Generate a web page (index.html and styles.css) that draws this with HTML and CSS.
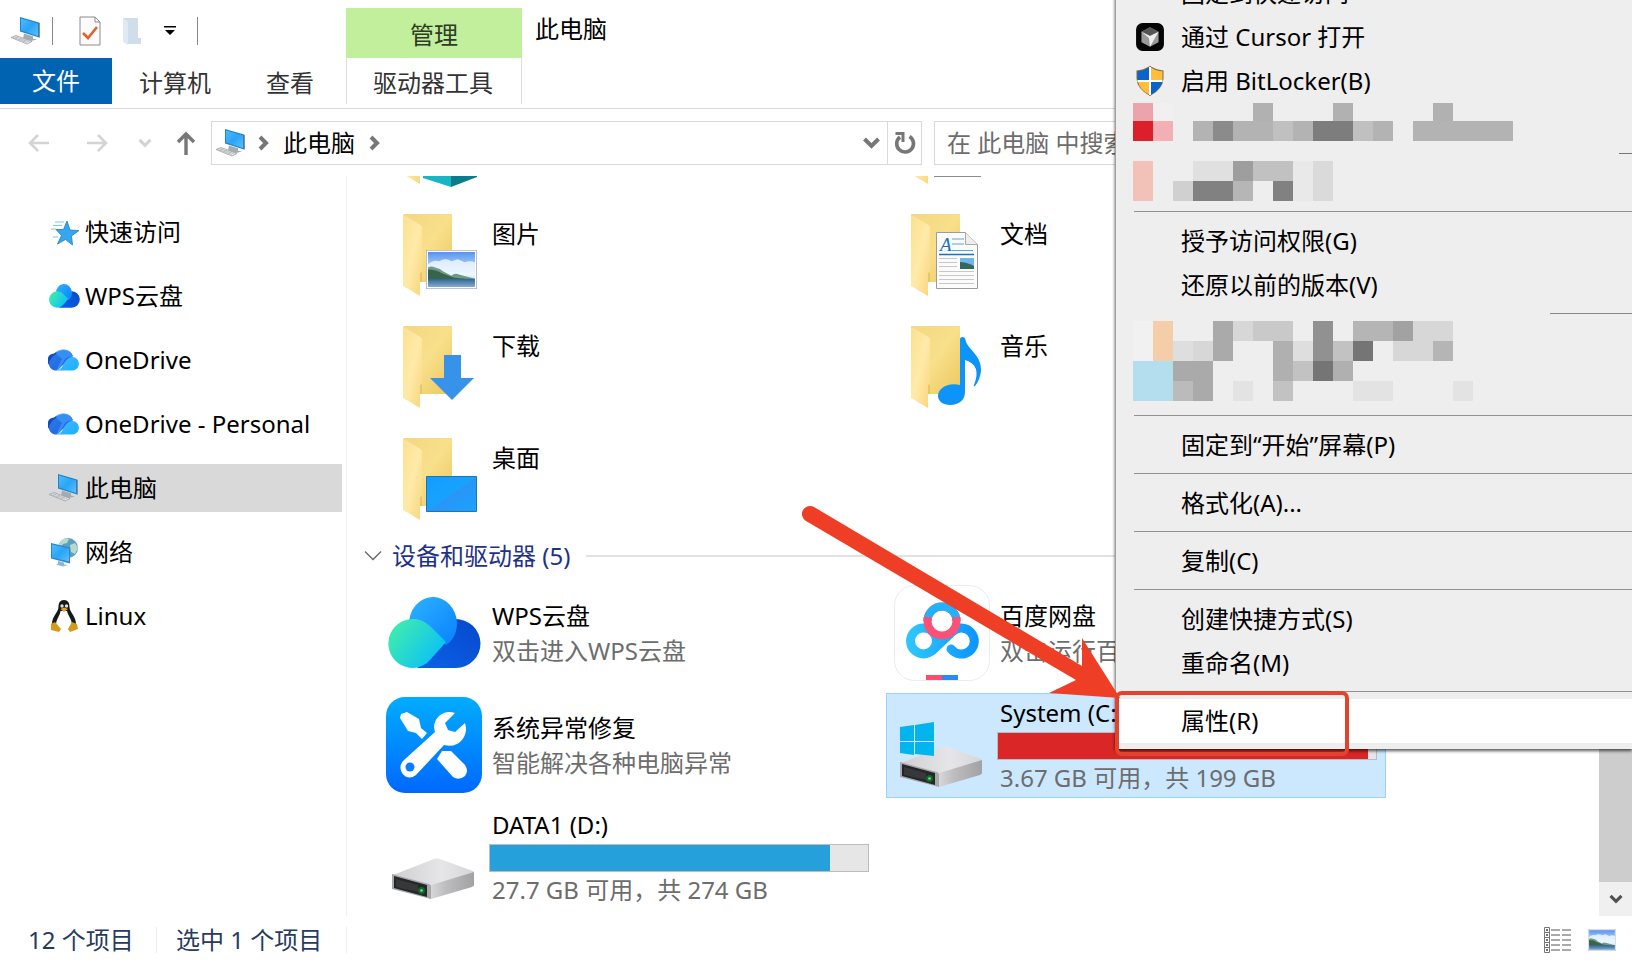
FILE: index.html
```
<!DOCTYPE html>
<html lang="zh-CN">
<head>
<meta charset="utf-8">
<title>此电脑</title>
<link rel="stylesheet" href="styles.css">
</head>
<body>
<svg class="defs" aria-hidden="true">
  <defs>
    <linearGradient id="gBack" x1="0" y1="0" x2="1" y2="1"><stop offset="0" stop-color="#f3d883"/><stop offset=".5" stop-color="#f8df8a"/><stop offset="1" stop-color="#ecc75d"/></linearGradient>
    <linearGradient id="gFront" x1="0" y1="0" x2="1" y2="1"><stop offset="0" stop-color="#fbe08e"/><stop offset=".5" stop-color="#ffeaa8"/><stop offset="1" stop-color="#f7d67c"/></linearGradient>
    <linearGradient id="gScreen" x1="0" y1="0" x2="1" y2="1"><stop offset="0" stop-color="#4dbcff"/><stop offset=".5" stop-color="#2ba4f7"/><stop offset="1" stop-color="#5cc0ff"/></linearGradient>
    <linearGradient id="gSky" x1="0" y1="0" x2="0" y2="1"><stop offset="0" stop-color="#5793ee"/><stop offset=".45" stop-color="#b5d6f8"/><stop offset=".7" stop-color="#d8edfa"/></linearGradient>
    <linearGradient id="gWater" x1="0" y1="0" x2="0" y2="1"><stop offset="0" stop-color="#2f648b"/><stop offset="1" stop-color="#83abd6"/></linearGradient>
    <linearGradient id="gGreen" x1="0" y1=".2" x2="1" y2=".8"><stop offset="0" stop-color="#42edaa"/><stop offset="1" stop-color="#05bdff"/></linearGradient>
    <linearGradient id="gCloudTop" x1="0" y1="0" x2="1" y2="1"><stop offset="0" stop-color="#2cb4ff"/><stop offset="1" stop-color="#0a80ff"/></linearGradient>
    <linearGradient id="gCloudDark" x1="0" y1="1" x2="1" y2="0"><stop offset="0" stop-color="#0a62e8"/><stop offset="1" stop-color="#0748cc"/></linearGradient>
    <linearGradient id="gOne" x1="0" y1="0" x2="1" y2="1"><stop offset="0" stop-color="#2f7fe8"/><stop offset="1" stop-color="#1a5fe0"/></linearGradient>
    <linearGradient id="gOneLight" x1="0" y1="0" x2="1" y2="1"><stop offset="0" stop-color="#50b0ff"/><stop offset="1" stop-color="#12b5fb"/></linearGradient>
    <linearGradient id="gTool" x1="0" y1="0" x2="0" y2="1"><stop offset="0" stop-color="#00adff"/><stop offset="1" stop-color="#0068ff"/></linearGradient>
    <linearGradient id="gDriveTop" x1="0" y1="0" x2="1" y2="0"><stop offset="0" stop-color="#cfcfd1"/><stop offset=".6" stop-color="#e6e6e8"/><stop offset="1" stop-color="#d6d6d8"/></linearGradient>
    <linearGradient id="gDriveSide" x1="0" y1="0" x2="1" y2="0"><stop offset="0" stop-color="#dededf"/><stop offset=".4" stop-color="#bdbdbf"/><stop offset="1" stop-color="#a2a2a5"/></linearGradient>
    <linearGradient id="gBd" gradientUnits="userSpaceOnUse" x1="12" y1="0" x2="84" y2="0"><stop offset="0" stop-color="#30c8fb"/><stop offset="1" stop-color="#0c95ff"/></linearGradient>
    <linearGradient id="gDesk" x1="0" y1="0" x2="1" y2="1"><stop offset="0" stop-color="#129cff"/><stop offset=".5" stop-color="#18a2ff"/><stop offset=".51" stop-color="#2a95f5"/><stop offset="1" stop-color="#1aa2ff"/></linearGradient>
    <symbol id="pc" viewBox="0 0 32 30">
      <path d="M10 1l19 5.500v15L10 15.500z" fill="#2483c9"/>
      <path d="M11 2.500l17 5v12.600L11 14.500z" fill="url(#gScreen)"/>
      <path d="M29 6.500l1 .4v14.800l-1-.2z" fill="#85909a"/>
      <path d="M14 17.500l9 2.700v2.300l4 1-6 1.500-8-2.500z" fill="#a4acb2"/>
      <path d="M1 21.500l5-2 16 6-5 2.500z" fill="#e9ebec" stroke="#9ba1a6" stroke-width=".8"/>
      <path d="M3 21.500l14 5M5 20.700l14 5M8 21l-3 1.500M12 22.500l-3 1.500M16 24l-3 1.500" stroke="#aab0b5" stroke-width=".7"/>
    </symbol>
    <symbol id="folder" viewBox="0 0 96 96">
      <path d="M17 7h49v68H34z" fill="url(#gBack)"/>
      <path d="M36 20v55h-3V20z" fill="#dcb653" opacity=".5"/>
      <path d="M17 7.500l18 11q1 .7 1 2V65l-2 1v23L17 79z" fill="url(#gFront)"/>
    </symbol>
    <symbol id="photo" viewBox="0 0 50 38" preserveAspectRatio="none">
      <path d="M0 0h50v38H0z" fill="#a9b4bd"/><path d="M.8.800h48.400v36.400H.8z" fill="#fff"/>
      <path d="M2 2h46v34H2z" fill="url(#gSky)"/>
      <path d="M2 14q5-5 11-3 6-4 12 0l6-2 7 3q5-2 10 0v13H2z" fill="#f3faff" opacity=".8"/>
      <path d="M2 17q3-2 7 0 5 1 8 4l8 4q3-3 8-1l15 4v1H2z" fill="#6f9a83"/>
      <path d="M2 19q8 0 14 4l12 4 10 1v1H2z" fill="#35664c"/>
      <path d="M2 28h46v8H2z" fill="url(#gWater)"/>
    </symbol>
    <symbol id="wps" viewBox="0 0 96 72">
      <path d="M70 22a25 24.500 0 0 1 1 49H32q20-18 30-48z" fill="url(#gCloudDark)"/>
      <path d="M24 28A24 27 0 0 1 72 26q0 9-4 15-3 5-7 7L38 30z" fill="url(#gCloudTop)"/>
      <path d="M27 71a24.500 24.500 0 1 1 18-42l16 16Q47 61 42 66q-7 5-15 5z" fill="url(#gGreen)"/>
    </symbol>
    <symbol id="onedrive" viewBox="0 0 32 22">
      <path d="M6 4.500a7 7 0 0 1 9-.5L4 18a7 7 0 0 1 2-13.500z" fill="#144cbd"/>
      <path d="M8 5.500A9.500 9.500 0 0 1 25 7L9 21.500H7A6.500 6.500 0 0 1 2.500 11Q5 6 8 5.500z" fill="url(#gOne)"/>
      <path d="M7 3.500Q16-3 23 4l2 4q-6-1-9 4l-4 7q-1 2.500-4 2.500L14 10z" fill="#3c9cfa" opacity=".7"/>
      <path d="M9 21.500q4-1 6-5 4-9 10-8.500a6.800 6.800 0 0 1 0 13.500z" fill="url(#gOneLight)"/>
    </symbol>
    <symbol id="drive" viewBox="0 0 96 96">
      <path d="M7 66L48 50q3-1 6 0l33 12q2 1 0 2L45 79z" fill="url(#gDriveTop)"/>
      <path d="M42 77l46-14v13q0 1-2 2L45 90l-4-1z" fill="url(#gDriveSide)"/>
      <path d="M6 65l37 10q2 .5 2 3v12L6 80z" fill="#a8a8ab"/>
      <path d="M8 67l33 9v12L8 79z" fill="#242728"/>
      <path d="M10 70l22 6v7l-22-5z" fill="#35393a"/>
      <circle cx="35.500" cy="81.500" r="3.500" fill="#15652d"/><circle cx="35.500" cy="81.500" r="1.300" fill="#6fe789"/>
    </symbol>
    <symbol id="chevD" viewBox="0 0 18 12"><path d="M2 2l7 7 7-7" fill="none" stroke="currentColor" stroke-width="4"/></symbol>
    <symbol id="chevR" viewBox="0 0 12 16"><path d="M2 2l6 6-6 6" fill="none" stroke="currentColor" stroke-width="4"/></symbol>
  </defs>
</svg>

<header class="ribbon">
  <div class="title-row">
    <div class="quick">
      <svg class="i32"><use href="#pc"/></svg>
      <span class="bar"></span>
      <button class="bare" aria-label="属性"><svg class="q-doc" viewBox="0 0 22 30"><path d="M1 1h15l5 5v23H1z" fill="#fbfbfb" stroke="#8b8b8b"/><path d="M16 1v5h5" fill="none" stroke="#8b8b8b"/><path d="M4 17l5 5 9-11" fill="none" stroke="#e2622d" stroke-width="2.600"/></svg></button>
      <button class="bare" aria-label="新建文件夹"><svg class="q-fold" viewBox="0 0 20 30"><path d="M1 2h15v20h3v6H5z" fill="#d0deec"/><path d="M1 2l5 4v23l-5-3z" fill="#dfeaf5"/></svg></button>
      <button class="bare" aria-label="自定义"><svg class="q-tri" viewBox="0 0 12 10"><path d="M0 0h12v1.500H0zM1 4h10L6 9z"/></svg></button>
      <span class="bar"></span>
    </div>
    <div class="manage">管理</div>
    <h1 class="title">此电脑</h1>
  </div>
  <nav class="tabs">
    <button class="tab file">文件</button>
    <button class="tab">计算机</button>
    <button class="tab">查看</button>
    <button class="tab tools">驱动器工具</button>
  </nav>
</header>

<div class="nav-row">
  <div class="arrows">
    <button class="bare" aria-label="后退"><svg class="arrow" viewBox="0 0 22 20"><path d="M21 10H2M10 2l-8 8 8 8" fill="none" stroke="#d4d4d4" stroke-width="2.600"/></svg></button>
    <button class="bare" aria-label="前进"><svg class="arrow" viewBox="0 0 22 20"><path d="M1 10h19M12 2l8 8-8 8" fill="none" stroke="#d4d4d4" stroke-width="2.600"/></svg></button>
    <button class="bare pale" aria-label="最近"><svg class="chev-sm"><use href="#chevD"/></svg></button>
    <button class="bare" aria-label="上移"><svg class="up" viewBox="0 0 20 24"><path d="M10 24V3M2 11l8-8 8 8" fill="none" stroke="#777" stroke-width="3.400"/></svg></button>
  </div>
  <div class="address">
    <svg class="i32"><use href="#pc"/></svg>
    <svg class="crumb"><use href="#chevR"/></svg>
    <button class="bare">此电脑</button>
    <svg class="crumb"><use href="#chevR"/></svg>
    <button class="bare drop" aria-label="展开"><svg class="chev"><use href="#chevD"/></svg></button>
    <button class="bare refresh" aria-label="刷新"><svg viewBox="0 0 22 24"><path d="M15.500 5.500A8.400 8.400 0 1 1 6 6" fill="none" stroke="#777" stroke-width="3.600"/><path d="M1.500 2.500H9V11" fill="none" stroke="#777" stroke-width="3"/></svg></button>
  </div>
  <input class="search" type="text" aria-label="搜索" placeholder="在 此电脑 中搜索">
</div>

<div class="body">
  <nav class="side">
    <a href="#"><svg class="i32" viewBox="0 0 32 30"><path d="M19 4l3 9 9 .5-7.500 5.500 1 9-7-5.500-8 4.500 4-8.500-5.500-6h7.500z" fill="#35a7ef" stroke="#1e7cc4" stroke-width=".8"/><path d="M7 5h9M5 8.500h9M3 12h5M5 20h5" stroke="#7cc7f5" stroke-width="1.200"/></svg>快速访问</a>
    <a href="#"><svg class="i32"><use href="#wps"/></svg>WPS云盘</a>
    <a href="#"><svg class="i32"><use href="#onedrive"/></svg>OneDrive</a>
    <a href="#"><svg class="i32"><use href="#onedrive"/></svg>OneDrive - Personal</a>
    <a href="#" class="current"><svg class="i32"><use href="#pc"/></svg>此电脑</a>
    <a href="#"><svg class="i32" viewBox="0 0 32 30"><circle cx="20" cy="11" r="10" fill="#5a9fc4"/><path d="M13 4q4-4 8-2l-2 4-4 1-3 4-2-2zM22 8l5-2 3 5-3 6-4-2z" fill="#b8dbc9"/><path d="M3 6l19 4.500v16L3 21.500z" fill="#2e86c9"/><path d="M4 7.500l17 4v13L4 20.500z" fill="url(#gScreen)"/><path d="M10 24l6 1.500v2l4 .5-5 1.500-7-2 2-1z" fill="#8ab8d4"/></svg>网络</a>
    <a href="#"><svg class="i32 tux" viewBox="2 0 28 34"><path d="M16 1c4 0 5.500 3 5.500 7 0 5 6.500 9 6.500 17l-3 6H7l-3-6C4 17 10.500 13 10.500 8c0-4 1.500-7 5.500-7z" fill="#171717"/><path d="M12.500 12h6.500c1 5 5 8 5 14q-2 6-8 6t-8-6c0-6 4-9 4.500-14z" fill="#fff"/><circle cx="14" cy="7" r="1.700" fill="#ddd"/><circle cx="18.500" cy="7" r="1.700" fill="#ddd"/><path d="M12.500 10l3.500-1.500L20 10l-4 3z" fill="#e2a51d"/><path d="M3 25l4-2 6 7-2 3-8-2zM29 25l-5-2-4 7 2 3 8-3z" fill="#d29b19"/></svg>Linux</a>
  </nav>

  <main class="content">
    <section class="tiles clipped">
      <div class="tile"><svg class="i96" viewBox="0 0 96 96"><use href="#folder"/><path d="M37 50h28v42L37 83z" fill="#19b5c3"/><path d="M65 50h26v32l-26 10z" fill="#087d8c"/></svg></div>
      <div class="tile"><svg class="i96" viewBox="0 0 96 96"><use href="#folder"/><path d="M38 50h51v33H38z" fill="#fff"/><path d="M40 50h47v32H40z" fill="#8c8c8c"/></svg></div>
      <div class="tile"><svg class="i96" viewBox="0 0 96 96"><use href="#folder"/><use href="#photo" x="40" y="43" width="51" height="39"/></svg><p class="name">图片</p></div>
      <div class="tile"><svg class="i96" viewBox="0 0 96 96"><use href="#folder"/><path d="M42.500 25.500h29l12 12v44h-41z" fill="#fbfbfb" stroke="#9c9c9c"/><path d="M71.500 25.500v12h12" fill="#eee" stroke="#aaa"/><text x="46" y="44" class="doc-a">A</text><path d="M58 32h12M58 37h12M58 43.500h21" stroke="#62a3d5"/><path d="M45 47.500h35" stroke="#1673b8" stroke-width="1.500"/><path d="M45 51.500h18M45 55.500h18M45 59.500h18M45 64.500h35M45 68.500h35M45 72.500h35M45 76.500h35" stroke="#c8c8c8"/><path d="M66 51h14v11H66z" fill="#71b5ed"/><path d="M66 55q6 0 14 4v3H66z" fill="#34685d"/></svg><p class="name">文档</p></div>
      <div class="tile"><svg class="i96" viewBox="0 0 96 96"><use href="#folder"/><path d="M58 36h17v23h13L66 81 44 59h14z" fill="#3693e9"/></svg><p class="name">下载</p></div>
      <div class="tile"><svg class="i96" viewBox="0 0 96 96"><use href="#folder"/><path d="M66 20q0-2 2.500-2t3 3C73 30 88 36 87 52q-1 9-6 15-2 1-1-1 8-20-9-25v32c0 8-6 13-15 13-7 0-12-4-12-9 0-8 10-14 22-11z" fill="#0c94f8"/></svg><p class="name">音乐</p></div>
      <div class="tile"><svg class="i96" viewBox="0 0 96 96"><use href="#folder"/><path d="M40.500 45.500h50v35h-50z" fill="url(#gDesk)" stroke="#1c74b8"/></svg><p class="name">桌面</p></div>
    </section>

    <h2 class="group"><svg viewBox="0 0 18 12"><path d="M1 1.500l8 8 8-8" fill="none" stroke="#666" stroke-width="1.300"/></svg>设备和驱动器 (5)</h2>

    <section class="tiles">
      <div class="tile two"><svg class="i96" viewBox="1 -12 96 96"><use href="#wps" y="0" width="96" height="72"/></svg><div><p>WPS云盘</p><p class="sub">双击进入WPS云盘</p></div></div>
      <div class="tile two"><svg class="i96" viewBox="0 0 96 96"><rect x=".5" y=".5" width="95" height="95" rx="20" fill="#fff" stroke="#ebebf0"/><g fill="none" stroke="url(#gBd)" stroke-width="9"><circle cx="29.500" cy="56" r="13"/><path d="M57 64A13 13 0 1 0 58 47L39 65" stroke-linecap="round"/></g><g fill="none" stroke-width="8"><circle cx="48" cy="36" r="14.500" fill="#fff" stroke="#fb5176"/><path d="M33.500 36a14.500 14.500 0 0 1 29 0" stroke="#22b2fb"/><path d="M33.500 32v4M62.500 32v4" stroke="#fb5176"/></g><path d="M32 90h16v5H32z" fill="#f84e70"/><path d="M48 90h16v5H48z" fill="#258cf5"/></svg><div><p>百度网盘</p><p class="sub">双击运行百度网盘</p></div></div>
      <div class="tile two"><svg class="i96" viewBox="0 0 96 96"><rect width="96" height="96" rx="19" fill="url(#gTool)"/><path d="M15 17l6-2 12 7 2 9 6 5-5 6-6-6-8-2-8-13z" fill="#fff"/><path d="M56 54h9l14 14q4 6 0 11-6 5-12 1L51 62z" fill="#fff"/><path d="M69 16q-9-3-16 3-7 7-4 16L18 63q-6 6-2 13 6 8 14 2l28-30q11 3 18-5 6-8 3-17l-10 9-7-2-3-7z" fill="#fff"/><circle cx="24" cy="70" r="4.500" fill="#087bff"/></svg><div><p>系统异常修复</p><p class="sub">智能解决各种电脑异常</p></div></div>
      <div class="tile disk selected"><svg class="i96" viewBox="0 0 96 96"><use href="#drive"/><path d="M6 30l14-2v16H6zM21 28l19-3v19H21zM6 45h14v13L6 56zM21 45h19v14l-19-2z" fill="#02b5ee"/></svg><div><p>System (C:)</p><div class="meter full"><i style="width:98%"></i></div><p class="sub">3.67 GB 可用，共 199 GB</p></div></div>
      <div class="tile disk"><svg class="i96"><use href="#drive"/></svg><div><p>DATA1 (D:)</p><div class="meter"><i style="width:90%"></i></div><p class="sub">27.7 GB 可用，共 274 GB</p></div></div>
    </section>
  </main>

  <div class="scroll"><div class="thumb"></div><button class="bare" aria-label="向下滚动"><svg><use href="#chevD"/></svg></button></div>
</div>

<footer class="status">
  <span class="count">12 个项目</span>
  <span class="picked">选中 1 个项目</span>
  <button class="bare" aria-label="详细信息"><svg class="v-list" viewBox="0 0 28 26"><path d="M.5.500h5v25h-5zM.5 5.500h5M.5 10.500h5M.5 15.500h5M.5 20.500h5" fill="none" stroke="#777"/><path d="M7 3h9M18 3h9M7 8h9M18 8h9M7 13h9M18 13h9M7 18h9M18 18h9M7 23h9M18 23h9" stroke="#555"/><path d="M2 3h2M2 8h2M2 13h2M2 18h2M2 23h2" stroke="#444" stroke-width="1.500"/></svg></button>
  <button class="bare" aria-label="大图标"><svg class="v-pic"><use href="#photo"/></svg></button>
</footer>

<div class="menu" role="menu">
  <button role="menuitem">固定到快速访问</button>
  <button role="menuitem"><svg class="m-icon" viewBox="0 0 28 28"><rect x="1" y="1" width="26" height="26" rx="6" fill="#050505"/><path d="M14 5l8 4v10l-8 4-8-4V9z" fill="#999"/><path d="M6 9l8-4 8 4-8 4z" fill="#555"/><path d="M6 9l8 4 8-4-8 14-1-8z" fill="#eee"/></svg>通过 Cursor 打开</button>
  <button role="menuitem"><svg class="m-icon" viewBox="0 0 28 30"><path d="M14 0q7 4 13.500 4.500v8Q27 23 14 30 1 23 .5 12.500v-8Q7 4 14 0z" fill="#7a6a45"/><path d="M13 1.500V14H1.500V5.300Q8 5 13 1.500z" fill="#0a64cb"/><path d="M15 1.500V14h11.500V5.300Q20 5 15 1.500z" fill="#ffbf3d"/><path d="M13 28.500V16H2q2 8 11 12.500z" fill="#ffbf3d"/><path d="M15 28.500V16h11q-2 8-11 12.500z" fill="#0a64cb"/><path d="M13 1h2v28h-2zM1.500 14h25v2h-25z" fill="#fff"/></svg>启用 BitLocker(B)</button>
  <svg class="mosaic" viewBox="0 0 499 102" preserveAspectRatio="xMinYMin" aria-hidden="true">
    <path d="M0-1h20v19H0z" fill="#eba5aa"/><path d="M20-1h20v19H20z" fill="#f1efef"/><path d="M0 18h20v20H0z" fill="#dc202b"/><path d="M20 18h20v20H20z" fill="#f2afb4"/>
    <path d="M120-1h20v19h-20zM200-1h20v19h-20zM300-1h20v19h-20z" fill="#b1b1b1"/>
    <path d="M60 18h200v20H60zM280 18h100v20H280z" fill="#b3b3b3"/><path d="M80 18h20v20H80z" fill="#8b8b8b"/><path d="M180 18h40v20h-40z" fill="#7d7d7d"/><path d="M140 18h20v20h-20zM220 18h20v20h-20z" fill="#c0c0c0"/>
    <path d="M0 58h20v40H0z" fill="#f2c2b9"/><path d="M60 58h40v20H60z" fill="#e0e0e0"/><path d="M100 58h20v20h-20z" fill="#9e9e9e"/><path d="M120 58h40v20h-40z" fill="#c1c1c1"/><path d="M180 58h20v40h-20z" fill="#dadada"/><path d="M160 58h20v40h-20z" fill="#e9e9e9"/>
    <path d="M40 78h20v20H40z" fill="#d0d0d0"/><path d="M60 78h40v20H60zM140 78h20v20h-20z" fill="#818181"/><path d="M100 78h20v20h-20z" fill="#b6b6b6"/>
    <path d="M486 50h13v1h-13z" fill="#777"/>
  </svg>
  <hr>
  <button role="menuitem" class="more">授予访问权限(G)</button>
  <button role="menuitem">还原以前的版本(V)</button>
  <svg class="mosaic" viewBox="0 0 499 102" preserveAspectRatio="xMinYMin" aria-hidden="true">
    <path d="M20 14h20v40H20z" fill="#f4cda9"/><path d="M0 54h40v40H0z" fill="#b4ddee"/><path d="M0 14h20v40H0z" fill="#f1f1f1"/>
    <path d="M40 34h20v20H40zM160 34h20v20h-20z" fill="#dedede"/><path d="M60 34h20v20H60zM100 14h20v20h-20zM260 34h40v20h-40zM280 14h40v20h-40z" fill="#d7d7d7"/>
    <path d="M80 14h20v40H80zM60 54h20v40H60zM40 54h20v20H40z" fill="#aaa"/><path d="M40 74h20v20H40z" fill="#bbb"/>
    <path d="M120 14h40v20h-40z" fill="#c9c9c9"/><path d="M140 34h20v40h-20zM200 54h20v20h-20z" fill="#b0b0b0"/><path d="M140 74h20v20h-20zM160 54h20v20h-20zM200 34h20v20h-20z" fill="#c2c2c2"/>
    <path d="M180 14h20v40h-20z" fill="#919191"/><path d="M180 54h20v20h-20zM220 34h20v20h-20z" fill="#757575"/><path d="M220 14h40v20h-40zM300 34h20v20h-20z" fill="#b5b5b5"/><path d="M260 14h20v20h-20z" fill="#a2a2a2"/>
    <path d="M100 74h20v20h-20zM220 74h40v20h-40zM320 74h20v20h-20z" fill="#e3e3e3"/>
    <path d="M417 6h82v1h-82z" fill="#888"/>
  </svg>
  <hr>
  <button role="menuitem">固定到“开始”屏幕(P)</button>
  <hr>
  <button role="menuitem">格式化(A)...</button>
  <hr>
  <button role="menuitem">复制(C)</button>
  <hr>
  <button role="menuitem">创建快捷方式(S)</button>
  <button role="menuitem">重命名(M)</button>
  <hr>
  <button role="menuitem" class="hot">属性(R)</button>
</div>

<svg class="note" viewBox="0 0 560 270" aria-hidden="true">
  <path d="M14 7L282 166V138L320 198L249 193L276 180L6 21A8 8 0 0 1 14 7Z" fill="#ee3f26"/>
  <rect x="317" y="193" width="230" height="61" rx="5" fill="none" stroke="#e2432e" stroke-width="4"/>
</svg>
</body>
</html>
```
FILE: styles.css
```
* { box-sizing: border-box; }
html, body { height: 100%; }
body {
  margin: 0;
  display: flex;
  flex-direction: column;
  position: relative;
  overflow: hidden;
  background: #fff;
  color: #000;
  font: 24px/32px "Noto Sans", "Noto Sans CJK SC", sans-serif;
}
p, h1, h2 { margin: 0; font-size: 24px; font-weight: 400; }
button, input { font: inherit; color: inherit; }
svg { display: block; flex: none; }
a { color: inherit; text-decoration: none; }
.defs { position: absolute; width: 0; height: 0; }
.bare { border: 0; padding: 0; background: none; display: flex; align-items: center; flex: none; }
.i32 { width: 32px; height: 30px; }
.i96 { width: 96px; height: 96px; }
.tux { height: 34px; }

/* ribbon */
.ribbon { flex: none; border-bottom: 1px solid #d5d6d8; }
.title-row { display: flex; height: 58px; }
.quick { display: flex; align-items: center; width: 346px; padding: 4px 0 0 10px; }
.bar { width: 1px; height: 28px; background: #888; margin-left: 10px; }
.q-doc { width: 22px; height: 30px; margin-left: 26px; }
.q-fold { width: 20px; height: 30px; margin-left: 21px; }
.q-tri { width: 12px; height: 10px; margin-left: 22px; }
.quick .bar:last-child { margin-left: 21px; }
.manage { width: 176px; height: 50px; margin-top: 8px; padding-top: 11px; background: #c1ef9b; text-align: center; color: #2f3b28; }
.title { padding: 13px 0 0 13px; }
.tabs { display: flex; height: 50px; color: #333; }
.tab { border: 0; background: none; height: 46px; padding: 4px 28px 0 27px; }
.tab.file { width: 112px; background: #0063b1; color: #fff; padding: 0; }
.tab.tools { width: 176px; padding: 4px 2px 0 0; margin-left: 4px; border: solid #dedede; border-width: 0 1px; }

/* address row */
.nav-row { flex: none; display: flex; align-items: center; height: 67px; padding: 0 16px 0 28px; }
.arrows { display: flex; align-items: center; width: 183px; }
.arrow { width: 22px; height: 20px; margin-right: 36px; }
.pale { color: #d4d4d4; margin: 0 24px 0 -6px; }
.chev-sm { width: 14px; height: 10px; }
.up { width: 20px; height: 24px; }
.address { flex: 1; display: flex; align-items: center; height: 44px; padding-left: 3px; border: 1px solid #d9d9d9; color: #777; }
.address .bare { color: #000; }
.crumb { width: 12px; height: 16px; margin: 0 13px 0 11px; }
.address .bare + .crumb { margin-left: 14px; }
.address .drop { margin-left: auto; padding: 0 6px; color: #777; }
.chev { width: 19px; height: 12px; }
.address .refresh { width: 34px; height: 42px; border-left: 1px solid #d9d9d9; justify-content: center; }
.refresh svg { width: 22px; height: 24px; }
.search { width: 682px; height: 44px; margin-left: 12px; padding: 0 12px; border: 1px solid #d9d9d9; background: #fff; }
.search::placeholder { color: #6d6d6d; opacity: 1; }

/* main area */
.body { flex: 1; min-height: 0; display: flex; }
.side { flex: none; width: 347px; padding: 32px 4px 0 0; border-right: 1px solid #f0f0f0; }
.side a { display: flex; align-items: center; gap: 5px; height: 48px; margin-bottom: 16px; padding-left: 48px; white-space: nowrap; }
.side .current { background: #d9d9d9; }
.content { flex: 1; min-width: 0; overflow: hidden; padding-left: 31px; }
.tiles { display: grid; grid-template-columns: repeat(2, 500px); grid-auto-rows: 105px; gap: 7px 8px; }
.clipped { margin-top: -85px; }
.tile { display: flex; gap: 10px; padding: 3px 7px; border: 1px solid transparent; min-width: 0; }
.name { padding-top: 11px; }
.two p:first-child { padding-top: 15px; }
.two .sub { padding-top: 3px; }
.sub { color: #6d6d6d; white-space: nowrap; }
.selected { background: #cce8ff; border-color: #99d1ff; }
.disk > div { width: 380px; }
.meter { height: 28px; margin: 3px 0 2px -3px; background: #e6e6e6; border: 1px solid #bcbcbc; width: 380px; }
.meter i { display: block; height: 100%; background: #26a0da; }
.meter.full i { background: #da2626; }
.group { display: flex; align-items: center; height: 49px; margin-left: -14px; padding-bottom: 2px; color: #1e3287; }
.group svg { width: 18px; height: 12px; margin-right: 10px; }
.group::after { content: ""; flex: 1; height: 2px; margin-left: 16px; background: #e2e2e2; }
.doc-a { font: italic 19px "Liberation Serif", serif; fill: #1673b8; }
.scroll { flex: none; width: 33px; display: flex; flex-direction: column; background: #f0f0f0; }
.thumb { flex: 1; margin-top: 200px; background: #cdcdcd; }
.scroll .bare { height: 34px; justify-content: center; color: #505050; }
.scroll svg { width: 14px; height: 10px; }

.status { flex: none; display: flex; align-items: center; height: 48px; padding: 0 16px 0 28px; color: #263b5e; }
.status span { border-right: 1px solid #ededed; line-height: 26px; }
.count { width: 129px; }
.picked { width: 190px; padding-left: 19px; margin-right: auto; }
.v-list { width: 28px; height: 26px; margin-right: 16px; }
.v-pic { width: 28px; height: 22px; }

.menu { position: absolute; top: -29px; left: 1115px; right: 0; padding-bottom: 6px; background: #eee; border-left: 1px solid #a0a0a0; box-shadow: 0 2px 3px rgba(0, 0, 0, .65); }
.menu button { display: flex; align-items: center; position: relative; width: 100%; height: 44px; padding: 0 0 0 65px; border: 0; background: none; text-align: left; }
.menu .hot { background: #fff; }
.m-icon { position: absolute; left: 19px; width: 30px; height: 30px; }
.menu hr { height: 1px; margin: 6px 0 7px 18px; border: 0; background: #919191; }
.mosaic { width: 499px; height: 102px; margin-left: 17px; }
.more::after { content: ""; position: absolute; right: -16px; width: 18px; height: 18px; border: solid #000; border-width: 2px 2px 0 0; transform: rotate(45deg); }
.note { position: absolute; left: 800px; top: 500px; width: 560px; height: 270px; pointer-events: none; }
```
